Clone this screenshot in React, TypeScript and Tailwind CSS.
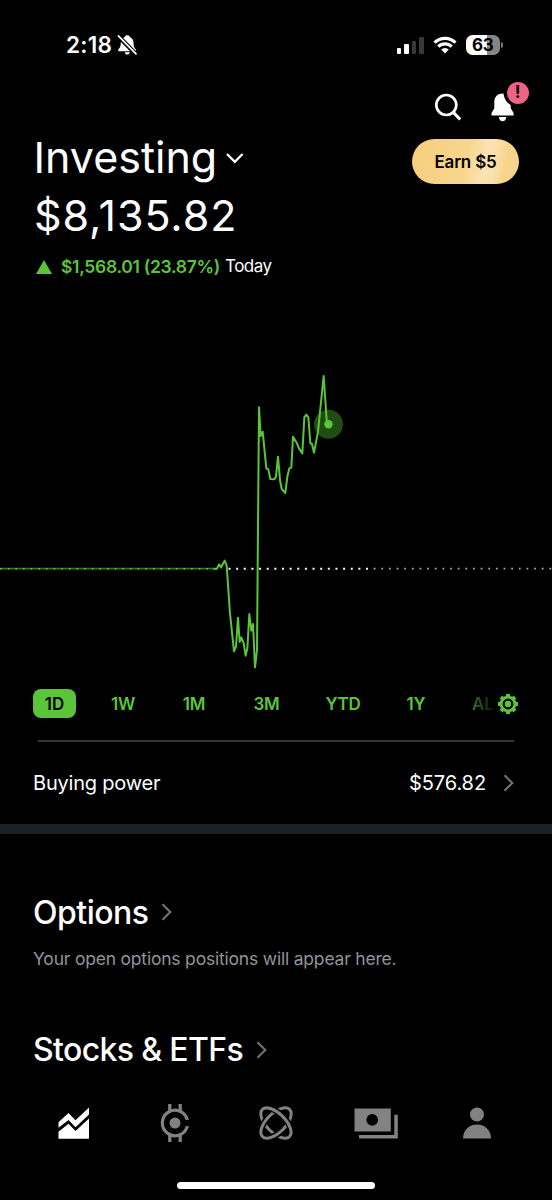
const GREEN = '#5ac53a';

const ranges = [
  { label: '1W', width: 'w-[70px]' },
  { label: '1M', width: 'w-[72px]' },
  { label: '3M', width: 'w-[73px]' },
  { label: 'YTD', width: 'w-[80px]' },
  { label: '1Y', width: 'w-[66px]' },
];

// one unit is a third of a pixel
const intraday =
  '40,626 51,626 57,613 63,622 74,602 80,617 90,760 102,874 108,860 114,773 119,846 124,832 131,850 137,887 142,865 148,762 154,812 159,792 165,922 171,870 173,620 177,142 182,228 188,215 199,325 205,328 211,357 223,358 228,350 234,290 240,360 245,387 256,399 262,350 268,325 274,323 279,230 290,248 297,265 307,280 313,172 319,164 325,172 331,250 336,252 342,278 354,215 371,48 380,180 385,192';

const ChevronRight = ({ className = '' }: { className?: string }) => (
  <svg className={className} width="12" height="20" viewBox="0 0 12 20" fill="none" stroke="#727272" strokeWidth="2.1">
    <path d="M1.5 2.2 9.3 10 1.5 17.8" />
  </svg>
);

const StatusBar = () => (
  <div className="flex h-[90px] items-center pr-[49px] pl-[66px]">
    <span className="text-[22.5px] font-semibold tracking-[0.3px] text-white">2:18</span>
    <svg className="ml-[5px]" width="21" height="22" viewBox="0 0 21 22">
      <path
        fill="#fff"
        d="M10.3 1.2c1.3 0 2.2.7 2.5 1.7 2.3.9 3.7 3 3.7 5.6 0 4 .7 5.2 2.2 6.8.6.7.3 1.9-.8 1.9H2.2c-1.1 0-1.5-1.1-.8-1.9C3 13.7 3.8 12.5 3.8 8.5c0-2.6 1.5-4.7 3.9-5.6.3-1 1.3-1.7 2.6-1.7ZM7.7 18.3h5.2c-.3 1.5-1.3 2.3-2.6 2.3s-2.3-.8-2.6-2.3Z"
      />
      <path d="M1.2 2.1 19 20.2" stroke="#000" strokeWidth="4.4" />
      <path d="M1.4 1.8 19 19.9" stroke="#fff" strokeWidth="1.7" strokeLinecap="round" />
    </svg>
    <div className="ml-auto flex items-center">
      <div className="flex h-[18px] items-end gap-[3px]">
        <i className="h-[6px] w-[4.5px] rounded-[1px] bg-white" />
        <i className="h-[10px] w-[4.5px] rounded-[1px] bg-white" />
        <i className="h-[13px] w-[4.5px] rounded-[1px] bg-[#383838]" />
        <i className="h-[17px] w-[4.5px] rounded-[1px] bg-[#383838]" />
      </div>
      <svg className="ml-[9px]" width="24" height="18" viewBox="0 0 24 18" fill="none" stroke="#fff" strokeWidth="3.2">
        <path d="M1.5 6.6a15 15 0 0 1 21 0M5.3 10.6a9.6 9.6 0 0 1 13.4 0" />
        <path d="M12 17.4 8.2 13.6a5.4 5.4 0 0 1 7.600 0Z" fill="#fff" stroke="none" />
      </svg>
      <div className="ml-[9px] flex h-[19.5px] w-[34.5px] items-center justify-center rounded-[6.5px] bg-[linear-gradient(90deg,#fff_63%,#858585_63%)]">
        <span className="text-[17px] leading-none font-bold tracking-[-0.3px] text-black">63</span>
      </div>
      <i className="ml-[1px] h-[6px] w-[2px] rounded-r-full bg-[#777]" />
    </div>
  </div>
);

const HeaderIcons = () => (
  <div className="flex h-[34px] items-center pl-[434px]">
    <svg width="28" height="30" viewBox="0 0 28 30" fill="none" stroke="#fff" strokeWidth="2.7">
      <circle cx="12.3" cy="13" r="10" />
      <path d="m19 20 7.2 7.5" strokeWidth="3.2" />
    </svg>
    <div className="relative ml-[29px] h-[30px] w-[24px]">
      <svg width="24" height="30" viewBox="0 0 24 30" fill="#fff">
        <path d="M11.5 1.5c4.8 0 8.2 3.5 8.2 8.4v6.3l2.9 4.9v2.4H.5v-2.4l2.8-4.900V9.9c0-4.9 3.5-8.4 8.2-8.4ZM8 25h7.2c0 2.4-1.4 4.2-3.6 4.2S8 27.400 8 25Z" />
        <circle cx="27" cy="0.5" r="14.5" fill="#000" />
      </svg>
      <span className="absolute top-[-10.5px] left-[15.5px] flex size-[22px] items-center justify-center rounded-full bg-[#ef6484] text-[17px] font-bold text-black">
        !
      </span>
    </div>
  </div>
);

const Chart = () => (
  <svg className="block" width="552" height="386" viewBox="0 294 552 386" fill="none">
    <path d="M0 568.7H214" stroke="#2f7a1d" strokeWidth="1.7" />
    <path d="M.2 568.7H222" stroke="#c9e6bf" strokeOpacity=".6" strokeWidth="1.5" strokeDasharray="1.5 6.14" />
    <path d="M228.5 568.7H368" stroke="#fff" strokeWidth="2" strokeDasharray="2 5.64" />
    <path d="M373.7 568.7H552" stroke="#a5a5a5" strokeWidth="1.8" strokeDasharray="1.8 5.84" />
    <circle cx="328.5" cy="424.2" r="14.5" fill="#1f4d14" />
    <polyline
      points={intraday}
      transform="translate(200 360) scale(.33333)"
      stroke={GREEN}
      strokeWidth="6"
      strokeLinejoin="round"
    />
    <circle cx="328.5" cy="424.2" r="4.2" fill={GREEN} />
  </svg>
);

const Gear = () => (
  <svg width="20" height="20" viewBox="-10 -10 20 20" fill="none" stroke={GREEN}>
    <circle r="6.9" strokeWidth="2.9" />
    <circle r="3.2" fill={GREEN} stroke="none" />
    <path
      d="M0-7.5V-10M0 7.5V10M-7.5 0H-10M7.5 0H10M5.3-5.3 7-7M5.3 5.3 7 7M-5.3 5.3-7 7M-5.3-5.3-7-7"
      strokeWidth="4"
    />
  </svg>
);

const RangeTabs = () => (
  <div className="flex h-[47px] items-center pl-[33px] text-[17px] font-semibold text-[#5ac53a]">
    <div className="mr-3 flex h-[29px] w-[43px] items-center justify-center rounded-[8px] bg-[#5ac53a] pt-[2px] text-black">
      1D
    </div>
    {ranges.map((r) => (
      <div key={r.label} className={`${r.width} pt-[2px] text-center tracking-[-0.2px]`}>
        {r.label}
      </div>
    ))}
    <div className="ml-[23px] w-[21px] overflow-hidden bg-linear-to-r from-[#347424] to-[#0c1c08] bg-clip-text pt-[2px] text-transparent">
      AL
    </div>
    <div className="ml-[5px]">
      <Gear />
    </div>
  </div>
);

const BottomNav = () => (
  <nav className="flex h-[44px] items-center pl-[58px] text-[#828282]">
    <svg width="32" height="32" viewBox="0 0 32 32" fill="#fff">
      <path d="M.5 15.3 10.5 6l7 7.3L31 .6v6.8L17.5 20.2l-7-7.2L.5 20.7Z" />
      <path d="M.5 24.8 10.5 16.8l7 7.2L31 11.500v20.200H.5Z" />
    </svg>
    <svg className="ml-[69px]" width="32" height="40" viewBox="-16 -20 32 40" fill="none" stroke="currentColor" strokeWidth="3.2">
      <path d="M12.2-3.6A12.7 12.7 0 1 0 12.2 3.6" />
      <path d="M10.5-3.5H14M10.5 3.5H14" strokeWidth=".8" />
      <circle r="5.5" fill="currentColor" stroke="none" />
      <path d="M-5.2-19V-11.5M5.2-19V-11.5M-5.2 19V11.5M5.2 19V11.5" strokeWidth="3.3" />
    </svg>
    {/* two crossed orbits, the dark strokes cut the gaps where one passes under the other */}
    <svg className="ml-[67px]" width="36" height="36" viewBox="-18 -18 36 36" fill="none" stroke="currentColor" strokeWidth="3">
      <path d="M-19.2 0A19.2 9.5 0 0 0 19.2 0" transform="rotate(45)" />
      <ellipse rx="19.2" ry="9.5" transform="rotate(-45)" stroke="#000" strokeWidth="6.2" />
      <ellipse rx="19.2" ry="9.5" transform="rotate(-45)" />
      <g transform="rotate(45)">
        <path d="M-16 -5.25A19.2 9.5 0 0 1 16 -5.25" stroke="#000" strokeWidth="6.2" />
        <path d="M-19.2 .1A19.2 9.5 0 0 1 19.2 .1" />
      </g>
    </svg>
    <svg className="ml-[60px]" width="44" height="31" viewBox="0 0 44 31" fill="currentColor">
      <path fillRule="evenodd" d="M.5.5h36.3v23H.5ZM18.2 6.1a5.8 5.8 0 1 0 0 11.6 5.8 5.8 0 0 0 0-11.6Z" />
      <path d="M40.3 6.800h3.500v23.700H5V27h35.300Z" />
    </svg>
    <svg className="ml-[65px]" width="28" height="32" viewBox="0 0 28 32" fill="currentColor">
      <circle cx="14" cy="7.5" r="7" />
      <path d="M0 31.6C0 23.3 6 17.6 14 17.6S28 23.3 28 31.6Z" />
    </svg>
  </nav>
);

const App = () => {
  return (
    <div className="h-[1200px] w-[552px] overflow-hidden bg-black font-[Inter,'Liberation_Sans',sans-serif] text-white">
      <StatusBar />
      <HeaderIcons />

      <div className="flex h-[67px] items-center pl-[33.5px]">
        <h1 className="text-[43px] leading-none">Investing</h1>
        <svg className="ml-[7.5px]" width="20" height="12" viewBox="0 0 20 12" fill="none" stroke="#fff" strokeWidth="2.3">
          <path d="m2 2 7.8 7.8L17.6 2" />
        </svg>
        <button className="mt-[8px] mr-[33px] ml-auto h-[45px] w-[107px] rounded-full bg-[linear-gradient(100deg,#f6ce7c_0%,#f8d68e_50%,#fbe3b0_68%,#fae0a8_76%,#f8d48c_86%,#f7d289_100%)] pt-[2px] text-[17px] font-semibold tracking-[-0.2px] text-black">
          Earn $5
        </button>
      </div>
      <div className="flex h-[49px] items-center pl-[34px] text-[43px] leading-none tracking-[0.9px]">$8,135.82</div>
      <div className="flex h-[54px] items-center pl-[36px] text-[17.5px]">
        <svg width="16" height="14" viewBox="0 0 16 14">
          <path d="M8 0 16 14H0Z" fill={GREEN} />
        </svg>
        <span className="ml-[9px] font-semibold tracking-[-0.3px] text-[#5ac53a]">$1,568.01 (23.87%)</span>
        <span className="ml-[5px] text-[17px] tracking-[-0.5px]">Today</span>
      </div>

      <Chart />
      <RangeTabs />
      <div className="mx-[38px] mt-[13px] h-[1.5px] bg-[#363636]" />

      <div className="flex h-[82.5px] items-center pr-[37px] pl-[33px] text-[20px]">
        <span className="tracking-[-0.2px]">Buying power</span>
        <span className="ml-auto tracking-[-0.1px]">$576.82</span>
        <ChevronRight className="ml-[17px]" />
      </div>
      <div className="h-[10px] bg-[#1e2124]" />

      <section className="pt-[54px] pl-[33px]">
        <div className="flex h-[48px] items-center">
          <h2 className="pt-px text-[32px] leading-none font-medium tracking-[-0.5px]">Options</h2>
          <ChevronRight className="ml-[12px]" />
        </div>
        <p className="flex h-[46px] items-center text-[17.5px] tracking-[-0.2px] text-[#8f959b]">
          Your open options positions will appear here.
        </p>
      </section>
      <section className="pt-[44px] pl-[33px]">
        <div className="flex h-[48px] items-center">
          <h2 className="text-[32px] leading-none font-medium tracking-[-0.65px]">Stocks &amp; ETFs</h2>
          <ChevronRight className="ml-[13px]" />
        </div>
      </section>

      <div className="mt-[27px]">
        <BottomNav />
      </div>
      <div className="mx-auto mt-[37px] h-[7px] w-[198px] rounded-full bg-white" />
    </div>
  );
};

export default App;
